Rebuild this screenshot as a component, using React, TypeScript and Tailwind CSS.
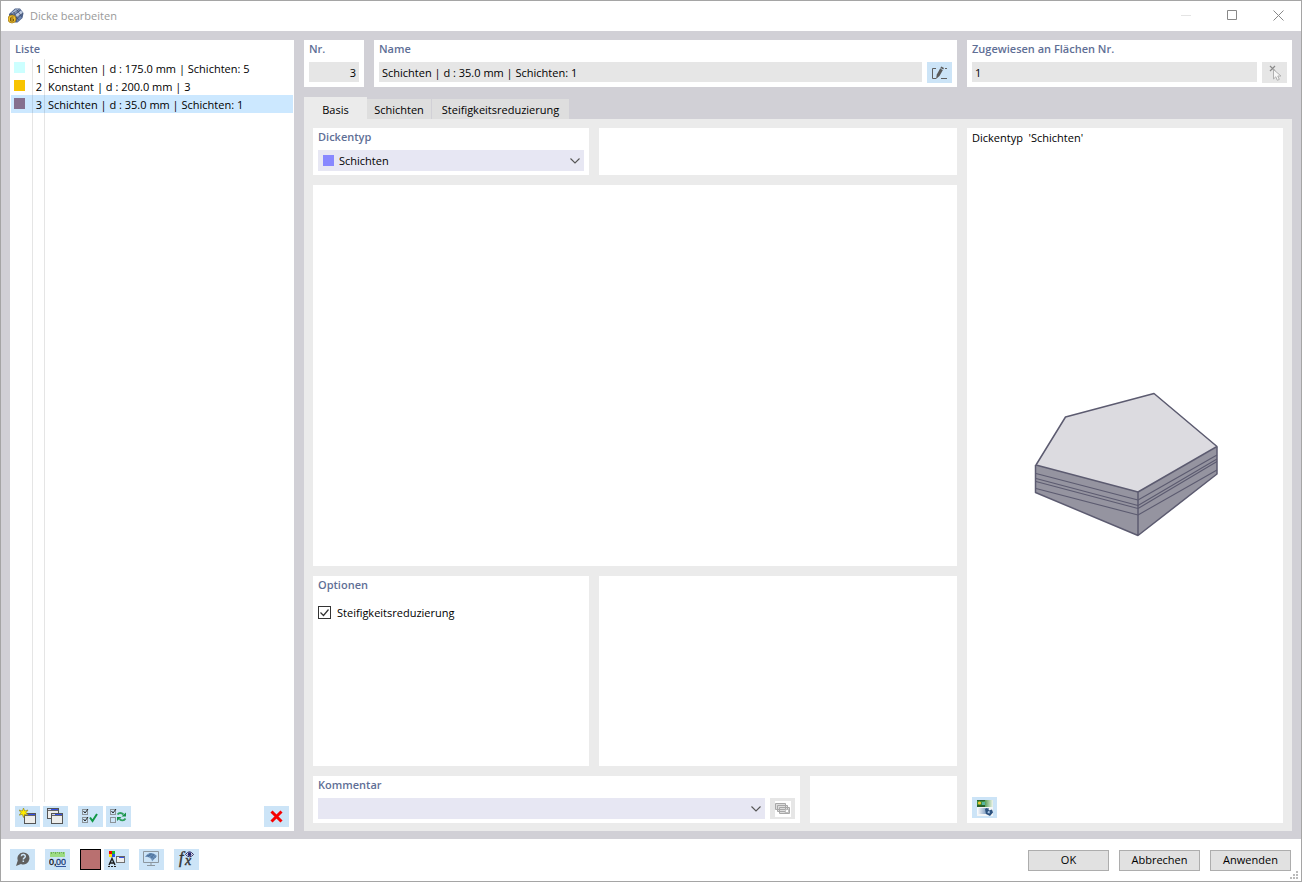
import React from "react";

const currentName = "Schichten | d : 35.0 mm | Schichten: 1";

const items = [
  { nr: 1, swatch: "bg-[#ccffff]", text: "Schichten | d : 175.0 mm | Schichten: 5", selected: false },
  { nr: 2, swatch: "bg-[#f8c400]", text: "Konstant | d : 200.0 mm | 3", selected: false },
  { nr: 3, swatch: "bg-[#85708f]", text: currentName, selected: true },
];

function AppIcon() {
  return (
    <svg width="16" height="16" viewBox="0 0 16 16" aria-hidden="true">
      <path d="M1 6 7 .5h5L15.500 5l-1 5-5 4.500H7L1 9z" fill="#4a5f88" />
      <path d="m3 5 5-4 4 .5L6 6.500z" fill="#a9bad6" />
      <path d="m7 7 6-4.500 2 2.500-6 5z" fill="#c0cce2" />
      <path d="m9 11 5-4-.5 3L9 14z" fill="#6f87b4" />
      <path d="M8.500 1.500 14 9M5.500 4l5 8M3 7l8-5.500M8 10l7-5" fill="none" stroke="#2e3c5a" strokeWidth=".6" />
      <circle cx="4" cy="11" r="4" fill="#f0c030" stroke="#9a7414" strokeWidth=".7" />
      <path d="M5.500 9H3.500L2.500 10v3h3v-2h-3" fill="none" stroke="#7d5c0c" />
    </svg>
  );
}

function RenameIcon() {
  return (
    <svg width="16" height="16" viewBox="0 0 16 16" fill="none" aria-hidden="true">
      <path d="M4 3.500H.5v10H4M13 3.500h2M9 13.500h6" stroke="#5f5f5f" />
      <path d="m4 14 .8-4.500L9.200 1.500l2.800 1.500-4.500 8z" fill="#5a5a5a" />
      <path d="m8.300 3.200 2.800 1.600" stroke="#cce4f7" strokeWidth=".8" />
    </svg>
  );
}

function PickIcon() {
  return (
    <svg width="16" height="16" viewBox="0 0 16 16" fill="none" aria-hidden="true">
      <path d="m3 1 5 5M8 1 3 6" stroke="#8a8a8a" strokeWidth="1.200" />
      <path d="M6.500 4.500v9.500l2.300-2.200 1.500 3.500 2-.9-1.500-3.400h3.200z" fill="#f6f6f6" stroke="#b0b0b0" />
    </svg>
  );
}

function WindowShape({ x, y }: { x: number; y: number }) {
  return (
    <g>
      <rect x={x + 0.5} y={y + 0.5} width="11" height="10" fill="#ededeb" stroke="#555" />
      <path d={`M${x + 1} ${y + 1.5}h10`} stroke="#cfd6ee" />
      <path d={`M${x + 4} ${y + 1.5}h7`} stroke="#3450e6" strokeWidth="1" />
      <path d={`M${x + 1} ${y + 2.5}h10`} stroke="#666" />
    </g>
  );
}

function NewIcon() {
  return (
    <svg width="17" height="17" viewBox="0 0 17 17" aria-hidden="true">
      <WindowShape x={5} y={5} />
      <path d="m4.500 0 1.200 3L9 2 7 4.700 9 7 5.800 6.300 4.500 9.500 3.300 6.300.2 7.200 2 4.700 0 2l3.300 1z" fill="#ffed00" stroke="#8b7d17" strokeWidth=".6" />
    </svg>
  );
}

function CopyIcon() {
  return (
    <svg width="17" height="17" viewBox="0 0 17 17" aria-hidden="true">
      <WindowShape x={0} y={0} />
      <WindowShape x={4} y={5} />
    </svg>
  );
}

function TickBox({ y, ticked }: { y: number; ticked: boolean }) {
  return (
    <g fill="none">
      <rect x=".5" y={y + 0.5} width="5" height="5" stroke="#8b9399" />
      {ticked && <path d={`m1.500 ${y + 2} 1.500 2L6 ${y}`} stroke="#222" />}
    </g>
  );
}

function SelectAllIcon() {
  return (
    <svg width="17" height="15" viewBox="0 0 17 15" aria-hidden="true">
      <TickBox y={0} ticked />
      <TickBox y={8} ticked />
      <path d="m8 8.500 2.500 3.500L15 5" fill="none" stroke="#119846" strokeWidth="2" />
    </svg>
  );
}

function InvertIcon() {
  return (
    <svg width="17" height="15" viewBox="0 0 17 15" fill="none" aria-hidden="true">
      <TickBox y={0} ticked />
      <TickBox y={8} ticked={false} />
      <path d="M7.500 5.500C9 3.500 11.500 3.500 13.500 5.500M15.500 9.500C14 12 11.500 12 9.500 10" stroke="#30a060" strokeWidth="1.800" />
      <path d="M16 3.500v4h-4.500zM7 12V8h4.500z" fill="#159348" />
    </svg>
  );
}

function DeleteIcon() {
  return (
    <svg width="13" height="13" viewBox="0 0 13 13" aria-hidden="true">
      <path d="m1.500 1.500 10 10M11.500 1.500l-10 10" stroke="#f60000" strokeWidth="3" />
    </svg>
  );
}

function HelpIcon() {
  return (
    <svg width="15" height="15" viewBox="0 0 15 15" fill="none" aria-hidden="true">
      <path d="M1 14 2.800 8.500A6 6 0 1 1 6 11.900z" fill="#606060" />
      <path d="M6.300 4.200C6.500 2 10.500 2 10.300 4.500 10.200 6 8.300 5.700 8.300 7.500M8.300 8.500V10" stroke="#cce4f7" strokeWidth="1.500" />
    </svg>
  );
}

function UnitsIcon() {
  return (
    <svg width="17" height="17" viewBox="0 0 17 17" aria-hidden="true">
      <rect x="1" y="1" width="15" height="5" fill="#9ddc83" />
      <path d="M2.500 1v2M4.500 1v1M6.500 1v2M8.500 1v1M10.500 1v2M12.500 1v1M14.500 1v2" stroke="#6fae60" />
      <text x="0" y="14" fontSize="9" fontFamily="Liberation Sans, sans-serif" fill="#111" stroke="#111" strokeWidth=".3">0,</text>
      <text x="7" y="14" fontSize="9" fontFamily="Liberation Sans, sans-serif" fill="#1e3c78" stroke="#1e3c78" strokeWidth=".3">00</text>
      <path d="M7 15.500h10" stroke="#3457a0" />
    </svg>
  );
}

function DisplayIcon() {
  return (
    <svg width="17" height="17" viewBox="0 0 17 17" aria-hidden="true">
      <path d="M1 0h3v3H1z" fill="#f00000" />
      <path d="M4 0h3v3H4z" fill="#20b828" />
      <path d="M1 3h3v3H1z" fill="#ffe000" />
      <path d="M4 3h3v3H4z" fill="#2552e8" />
      <path d="M1 14 4 7.500 7 14M2 12h4" fill="none" stroke="#1c1c1c" strokeWidth="1.400" />
      <path d="M0 15.500h9" stroke="#222" strokeDasharray="2 1" />
      <rect x="8.500" y="5.500" width="8" height="6" fill="#eee" stroke="#707070" />
      <path d="M8 5.500h9" stroke="#666" />
      <path d="M11 6.500h5" stroke="#3450e6" />
    </svg>
  );
}

function MonitorIcon() {
  return (
    <svg width="17" height="16" viewBox="0 0 17 16" aria-hidden="true">
      <path d="M.5.500h15v11H.5zM8 12v2M4 14.500h8" fill="none" stroke="#8c979f" />
      <path d="M2 6C5 1 10 1 14 5l-5 5.500C9 7.500 6 5.500 2 6z" fill="#6f93bb" />
      <path d="M4 4.500C8 4 10 6 11 8M6 3c4 0 6 2 6.500 4M5 6l3-3.500M8 7l3-4" fill="none" stroke="#456c97" strokeWidth=".7" />
    </svg>
  );
}

function FormulaIcon() {
  return (
    <svg width="18" height="18" viewBox="0 0 18 18" aria-hidden="true">
      <text x="1" y="13" fontSize="16" fontStyle="italic" fontFamily="Liberation Serif, serif" fill="#333" stroke="#333" strokeWidth=".4">f</text>
      <text x="7" y="15" fontSize="14" fontStyle="italic" fontFamily="Liberation Serif, serif" fill="#333" stroke="#333" strokeWidth=".4">x</text>
      <path d="M7.500 4.500q4-5.500 8 0-4 4.500-8 0z" fill="#fff" stroke="#292960" />
      <circle cx="11.500" cy="4.200" r="1.900" fill="#252570" />
    </svg>
  );
}

function CommentIcon() {
  return (
    <svg width="16" height="16" viewBox="0 0 16 16" aria-hidden="true">
      <rect width="16" height="16" fill="#fff" />
      <path d="M.5 2.500h10v6H.5zM2.500 4.500h10v6h-10zM4.500 6.500h10v6h-10z" fill="#ddd" stroke="#a8a8a8" />
      <path d="m10 11.500 1-3h2.500v3z" fill="#fff" stroke="#aaa" strokeWidth=".7" />
    </svg>
  );
}

function PictureIcon() {
  return (
    <svg width="16" height="16" viewBox="0 0 16 16" aria-hidden="true">
      <defs>
        <linearGradient id="landscape">
          <stop offset=".4" stopColor="#3d8f3c" />
          <stop offset="1" stopColor="#f0f5ec" />
        </linearGradient>
        <linearGradient id="haze">
          <stop offset="0" stopColor="#ffffff" />
          <stop offset=".8" stopColor="#7d9cc0" />
        </linearGradient>
      </defs>
      <rect width="16" height="16" fill="#f4f6f7" />
      <path d="M0 0h16v7H0z" fill="url(#landscape)" />
      <path d="M0 0h8v1H0zM0 5h8v2H0z" fill="#27602b" />
      <path d="M5 2h3v3H5z" fill="#59b6a0" />
      <circle cx="2.500" cy="3" r="1.600" fill="#f2c531" />
      <path d="M0 8h12v6H0z" fill="url(#haze)" />
      <path d="m8 9 2-1 2 2.500 3-1 1 3-3 3.500-4-2z" fill="#2c527f" />
      <path d="m11 11 2 .5-.5 2-2-.5z" fill="#a9c6e8" />
    </svg>
  );
}

function LayersDrawing() {
  return (
    <svg width="186" height="146" viewBox="1033 391 186 146" role="img" aria-label="Schichten" strokeLinejoin="round">
      <path d="M1036 465 1138 492v43.500L1036 492.500zM1138 492l79-45v27l-79 61.500z" fill="#9594a0" />
      <path d="m1036 473.500 102 26.500 79-45M1036 478.500l102 27 79-46.500M1036 481.500l102 27 79-47M1036 488.500l102 26.500 79-45" fill="none" stroke="#5c5b70" strokeWidth="1.100" />
      <path d="m1036 465 29.500-48 88.500-23.500 63 53-79 45.500z" fill="#dcdbe0" stroke="#5c5b70" strokeWidth="1.500" />
      <path d="M1035.500 465v27.500l102.500 43 79-61.500v-27M1138 492v43.500" fill="none" stroke="#5c5b70" strokeWidth="1.500" />
    </svg>
  );
}

function Chevron() {
  return (
    <svg className="pointer-events-none col-start-1 row-start-1 mr-1 self-center justify-self-end" width="10" height="6" viewBox="0 0 10 6" aria-hidden="true">
      <path d="m.5.500 4.500 4.500L9.500.500" fill="none" stroke="#555" strokeWidth="1.100" />
    </svg>
  );
}

function IconButton({ label, children, disabled = false }: { label: string; children: React.ReactNode; disabled?: boolean }) {
  return (
    <button
      type="button"
      aria-label={label}
      disabled={disabled}
      className="flex h-[21px] w-[25px] shrink-0 items-center justify-center bg-[#cce4f7] disabled:bg-[#e6e6e6]"
    >
      {children}
    </button>
  );
}

const heading = "block h-[18px] text-[11px] leading-[18px] font-semibold text-[#5f6f96]";
const field = "h-5 w-full min-w-0 bg-[#e6e6e6] px-[3px]";
const dialogButton = "h-[21px] w-[81px] border border-[#adadad] bg-[#e1e1e1]";

export default function App() {
  return (
    <div className="flex min-h-screen flex-col border border-[#a5a5a5] bg-white font-['Open_Sans',sans-serif] text-[11px] leading-[18px] text-black">
      <header className="flex h-[30px] shrink-0 items-center pr-[17px] pb-px pl-[7px]">
        <AppIcon />
        <h1 className="ml-1.5 flex-1 text-[#999]">Dicke bearbeiten</h1>
        <div className="flex items-center gap-9">
          <button type="button" aria-label="Minimieren">
            <svg width="10" height="11" viewBox="0 0 10 11"><path d="M0 5.500h10" stroke="#e4e4e4" /></svg>
          </button>
          <button type="button" aria-label="Maximieren">
            <svg width="10" height="11" viewBox="0 0 10 11"><path d="M.5.500h9v9h-9z" fill="none" stroke="#888" /></svg>
          </button>
          <button type="button" aria-label="Schließen">
            <svg width="11" height="11" viewBox="0 0 11 11"><path d="m.5.500 10 10M10.500.500l-10 10" stroke="#888" /></svg>
          </button>
        </div>
      </header>

      <div className="flex flex-1 gap-2.5 bg-[#d1d0d6] px-[9px] pt-[9px] pb-2">
        <aside className="flex w-[284px] shrink-0 flex-col bg-white">
          <h2 className={`${heading} px-[5px]`}>Liste</h2>
          <ul className="flex flex-1 flex-col px-px pt-px leading-5">
            {items.map((item) => (
              <li key={item.nr} className={item.selected ? "flex h-[18px] bg-[#cce8ff]" : "flex h-[18px]"}>
                <span className="flex w-[22px] items-start border-r border-black/10 pt-[3px] pl-[3px]">
                  <span className={`h-[11px] w-[11px] ${item.swatch}`} />
                </span>
                <span className="w-3 border-r border-black/10 pr-0.5 text-right">{item.nr}</span>
                <span className="pl-[3px] whitespace-pre">{item.text}</span>
              </li>
            ))}
            <li className="flex flex-1" aria-hidden="true">
              <span className="w-[22px] border-r border-black/10" />
              <span className="w-3 border-r border-black/10" />
            </li>
          </ul>
          <div className="flex items-center px-[5px] pt-1 pb-1">
            <div className="flex gap-[3px]">
              <IconButton label="Neu"><NewIcon /></IconButton>
              <IconButton label="Kopieren"><CopyIcon /></IconButton>
            </div>
            <div className="ml-2.5 flex flex-1 gap-[3px]">
              <IconButton label="Alle auswählen"><SelectAllIcon /></IconButton>
              <IconButton label="Auswahl umkehren"><InvertIcon /></IconButton>
            </div>
            <IconButton label="Löschen"><DeleteIcon /></IconButton>
          </div>
        </aside>

        <main className="flex min-w-0 flex-1 flex-col">
          <div className="flex h-[47px] gap-2.5">
            <section className="w-[60px] bg-white px-[5px]">
              <label htmlFor="nr" className={heading}>Nr.</label>
              <input id="nr" readOnly value="3" className={`${field} mt-1 text-right`} />
            </section>
            <section className="min-w-0 flex-1 bg-white px-[5px]">
              <label htmlFor="name" className={heading}>Name</label>
              <div className="mt-1 flex gap-[5px]">
                <input id="name" readOnly value={currentName} className={field} />
                <IconButton label="Name bearbeiten"><RenameIcon /></IconButton>
              </div>
            </section>
            <section className="w-[325px] bg-white px-[5px]">
              <label htmlFor="flaechen" className={heading}>Zugewiesen an Flächen Nr.</label>
              <div className="mt-1 flex gap-[5px]">
                <input id="flaechen" readOnly value="1" className={field} />
                <IconButton label="Flächen wählen" disabled><PickIcon /></IconButton>
              </div>
            </section>
          </div>

          <div role="tablist" className="mt-2.5 flex h-[22px] items-end">
            <button type="button" role="tab" aria-selected="true" className="h-[22px] w-[63px] bg-[#ebebeb] pt-1">Basis</button>
            <button type="button" role="tab" aria-selected="false" className="h-5 w-[65px] border-r border-[#d1d0d6] bg-[#dedede] pt-0.5">Schichten</button>
            <button type="button" role="tab" aria-selected="false" className="h-5 w-[137px] bg-[#dedede] pt-0.5">Steifigkeitsreduzierung</button>
          </div>

          <div className="flex flex-1 gap-2.5 bg-[#ebebeb] px-[9px] pt-[9px] pb-2">
            <div className="flex min-w-0 flex-1 flex-col gap-2.5">
              <div className="flex h-[47px] gap-2.5">
                <section className="w-[276px] shrink-0 bg-white px-[5px]">
                  <label htmlFor="typ" className={heading}>Dickentyp</label>
                  <div className="mt-1 grid h-[21px] items-center bg-[#e7e7f3]">
                    <select id="typ" className="col-start-1 row-start-1 h-[21px] w-full appearance-none bg-transparent pl-[21px]">
                      <option>Schichten</option>
                    </select>
                    <span className="pointer-events-none col-start-1 row-start-1 ml-[5px] h-[11px] w-[11px] bg-[#8888ff]" />
                    <Chevron />
                  </div>
                </section>
                <section className="flex-1 bg-white" />
              </div>
              <section className="flex-[2] bg-white" />
              <div className="flex flex-1 gap-2.5">
                <section className="w-[276px] shrink-0 bg-white px-[5px]">
                  <h2 className={heading}>Optionen</h2>
                  <label className="mt-2.5 flex items-center gap-1.5">
                    <span className="grid">
                      <input type="checkbox" defaultChecked className="peer col-start-1 row-start-1 h-[13px] w-[13px] appearance-none border border-[#333] bg-white" />
                      <svg className="pointer-events-none invisible col-start-1 row-start-1 peer-checked:visible" width="13" height="13" viewBox="0 0 13 13" aria-hidden="true">
                        <path d="m2.500 6.500 3 3 5-6" fill="none" stroke="#333" strokeWidth="1.200" />
                      </svg>
                    </span>
                    Steifigkeitsreduzierung
                  </label>
                </section>
                <section className="flex-1 bg-white" />
              </div>
              <div className="flex h-[47px] gap-2.5">
                <section className="min-w-0 flex-1 bg-white px-[5px]">
                  <label htmlFor="kommentar" className={heading}>Kommentar</label>
                  <div className="mt-1 flex gap-[5px]">
                    <div className="grid h-[21px] flex-1 bg-[#e7e7f3]">
                      <select id="kommentar" className="col-start-1 row-start-1 h-[21px] w-full appearance-none bg-transparent pl-1">
                        <option></option>
                      </select>
                      <Chevron />
                    </div>
                    <IconButton label="Kommentare" disabled><CommentIcon /></IconButton>
                  </div>
                </section>
                <section className="w-[147px] bg-white" />
              </div>
            </div>
            <section className="flex w-[316px] shrink-0 flex-col bg-white px-[5px] pt-px pb-[5px]">
              <p className="whitespace-pre">Dickentyp  'Schichten'</p>
              <div className="flex flex-1 items-center justify-center pb-4 pl-0.5"><LayersDrawing /></div>
              <IconButton label="Bild"><PictureIcon /></IconButton>
            </section>
          </div>
        </main>
      </div>

      <footer className="relative flex h-[42px] shrink-0 items-center justify-between pr-2.5 pl-[9px]">
        <div className="flex items-center gap-2.5 pb-0.5">
          <IconButton label="Hilfe"><HelpIcon /></IconButton>
          <IconButton label="Einheiten"><UnitsIcon /></IconButton>
          <div className="flex gap-[3px]">
            <button type="button" aria-label="Farbe" className="h-[21px] w-[21px] border border-black bg-[#b97070]" />
            <IconButton label="Darstellung"><DisplayIcon /></IconButton>
          </div>
          <IconButton label="Ansicht"><MonitorIcon /></IconButton>
          <IconButton label="Formel"><FormulaIcon /></IconButton>
        </div>
        <div className="flex gap-2.5">
          <button type="button" className={dialogButton}>OK</button>
          <button type="button" className={dialogButton}>Abbrechen</button>
          <button type="button" className={dialogButton}>Anwenden</button>
        </div>
        <svg className="absolute right-[3px] bottom-0.5" width="8" height="8" viewBox="0 0 8 8" aria-hidden="true">
          <path d="M6 0h2v2H6zM3 3h2v2H3zM6 3h2v2H6zM0 6h2v2H0zM3 6h2v2H3zM6 6h2v2H6z" fill="#bbb" />
        </svg>
      </footer>
    </div>
  );
}
